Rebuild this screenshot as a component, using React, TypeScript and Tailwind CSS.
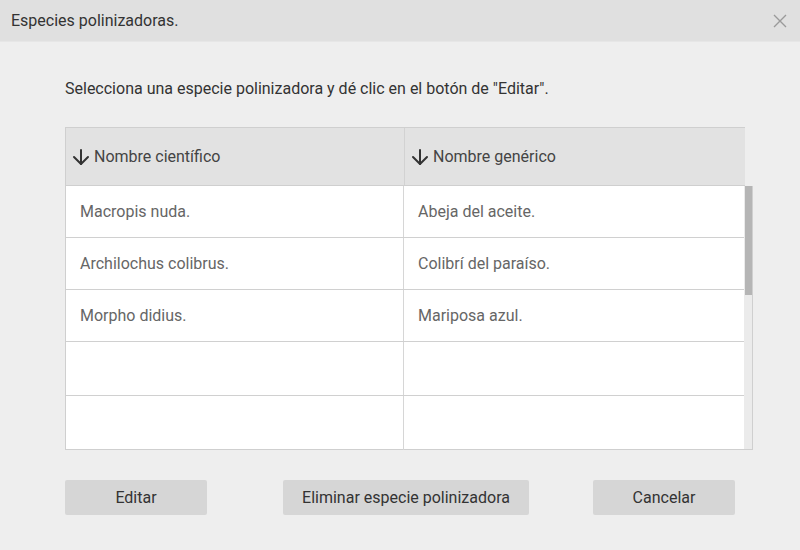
import { ArrowDown } from "lucide-react";

const rows = [
  { sci: "Macropis nuda.", gen: "Abeja del aceite.", h: "h-[52px]" },
  { sci: "Archilochus colibrus.", gen: "Colibrí del paraíso.", h: "h-[52px]" },
  { sci: "Morpho didius.", gen: "Mariposa azul.", h: "h-[52px]" },
  { sci: "", gen: "", h: "h-[54px]" },
  { sci: "", gen: "", h: "h-[54px]" },
];

export default function App() {
  return (
    <div className="w-[800px] h-[550px] bg-[#eeeeee] font-['Roboto',sans-serif] text-[16px] text-[#333333] overflow-hidden">
      {/* title bar */}
      <div className="h-[42px] bg-[#e0e0e0] border-b border-[#e6e6e6] flex items-center justify-between pl-[11px] pr-[12px]">
        <span className="text-[#333333]">Especies polinizadoras.</span>
        <svg className="w-[16px] h-[16px]" viewBox="0 0 16 16" fill="none" stroke="#9a9a9a" strokeWidth="1.4">
          <path d="M2 2l12 12M14 2L2 14" />
        </svg>
      </div>

      <div className="px-[65px] pt-[36px]">
        <p className="leading-[22px] text-[#333333]">
          Selecciona una especie polinizadora y dé clic en el botón de "Editar".
        </p>

        {/* table */}
        <div className="mt-[27px] w-[688px]">
          <div className="w-[680px] h-[59px] flex bg-[#e2e2e2] border-t border-b border-l border-[#cfcfcf] text-[#444444]">
            <div className="w-[339px] border-r border-[#d2d2d2] flex items-center pl-[3px] gap-[1px]">
              <ArrowDown size={24} strokeWidth={2} className="text-[#333333]" />
              <span>Nombre científico</span>
            </div>
            <div className="flex-1 flex items-center pl-[3px] gap-[1px]">
              <ArrowDown size={24} strokeWidth={2} className="text-[#333333]" />
              <span>Nombre genérico</span>
            </div>
          </div>
          <div className="flex h-[264px] border-b border-l border-[#cfcfcf]">
            <div className="w-[679px] bg-white">
              {rows.map((r, i) => (
                <div
                  key={i}
                  className={`${r.h} flex ${i < rows.length - 1 ? "border-b border-[#d0d0d0]" : ""}`}
                >
                  <div className="w-[338px] border-r border-[#d6d6d6] flex items-center pl-[14px] text-[#666666]">
                    {r.sci}
                  </div>
                  <div className="flex-1 flex items-center pl-[14px] text-[#666666]">{r.gen}</div>
                </div>
              ))}
            </div>
            <div className="w-[9px] bg-[#ebebeb] border-r border-[#cfcfcf] pl-[1px]">
              <div className="w-[7px] h-[109px] bg-[#b5b5b5]" />
            </div>
          </div>
        </div>

        {/* buttons */}
        <div className="mt-[30px] flex">
          <button className="w-[142px] h-[35px] bg-[#d6d6d6] rounded-[2px] text-[#333333]">Editar</button>
          <button className="ml-[76px] w-[246px] h-[35px] bg-[#d6d6d6] rounded-[2px] text-[#333333]">
            Eliminar especie polinizadora
          </button>
          <button className="ml-[64px] w-[142px] h-[35px] bg-[#d6d6d6] rounded-[2px] text-[#333333]">Cancelar</button>
        </div>
      </div>
    </div>
  );
}
